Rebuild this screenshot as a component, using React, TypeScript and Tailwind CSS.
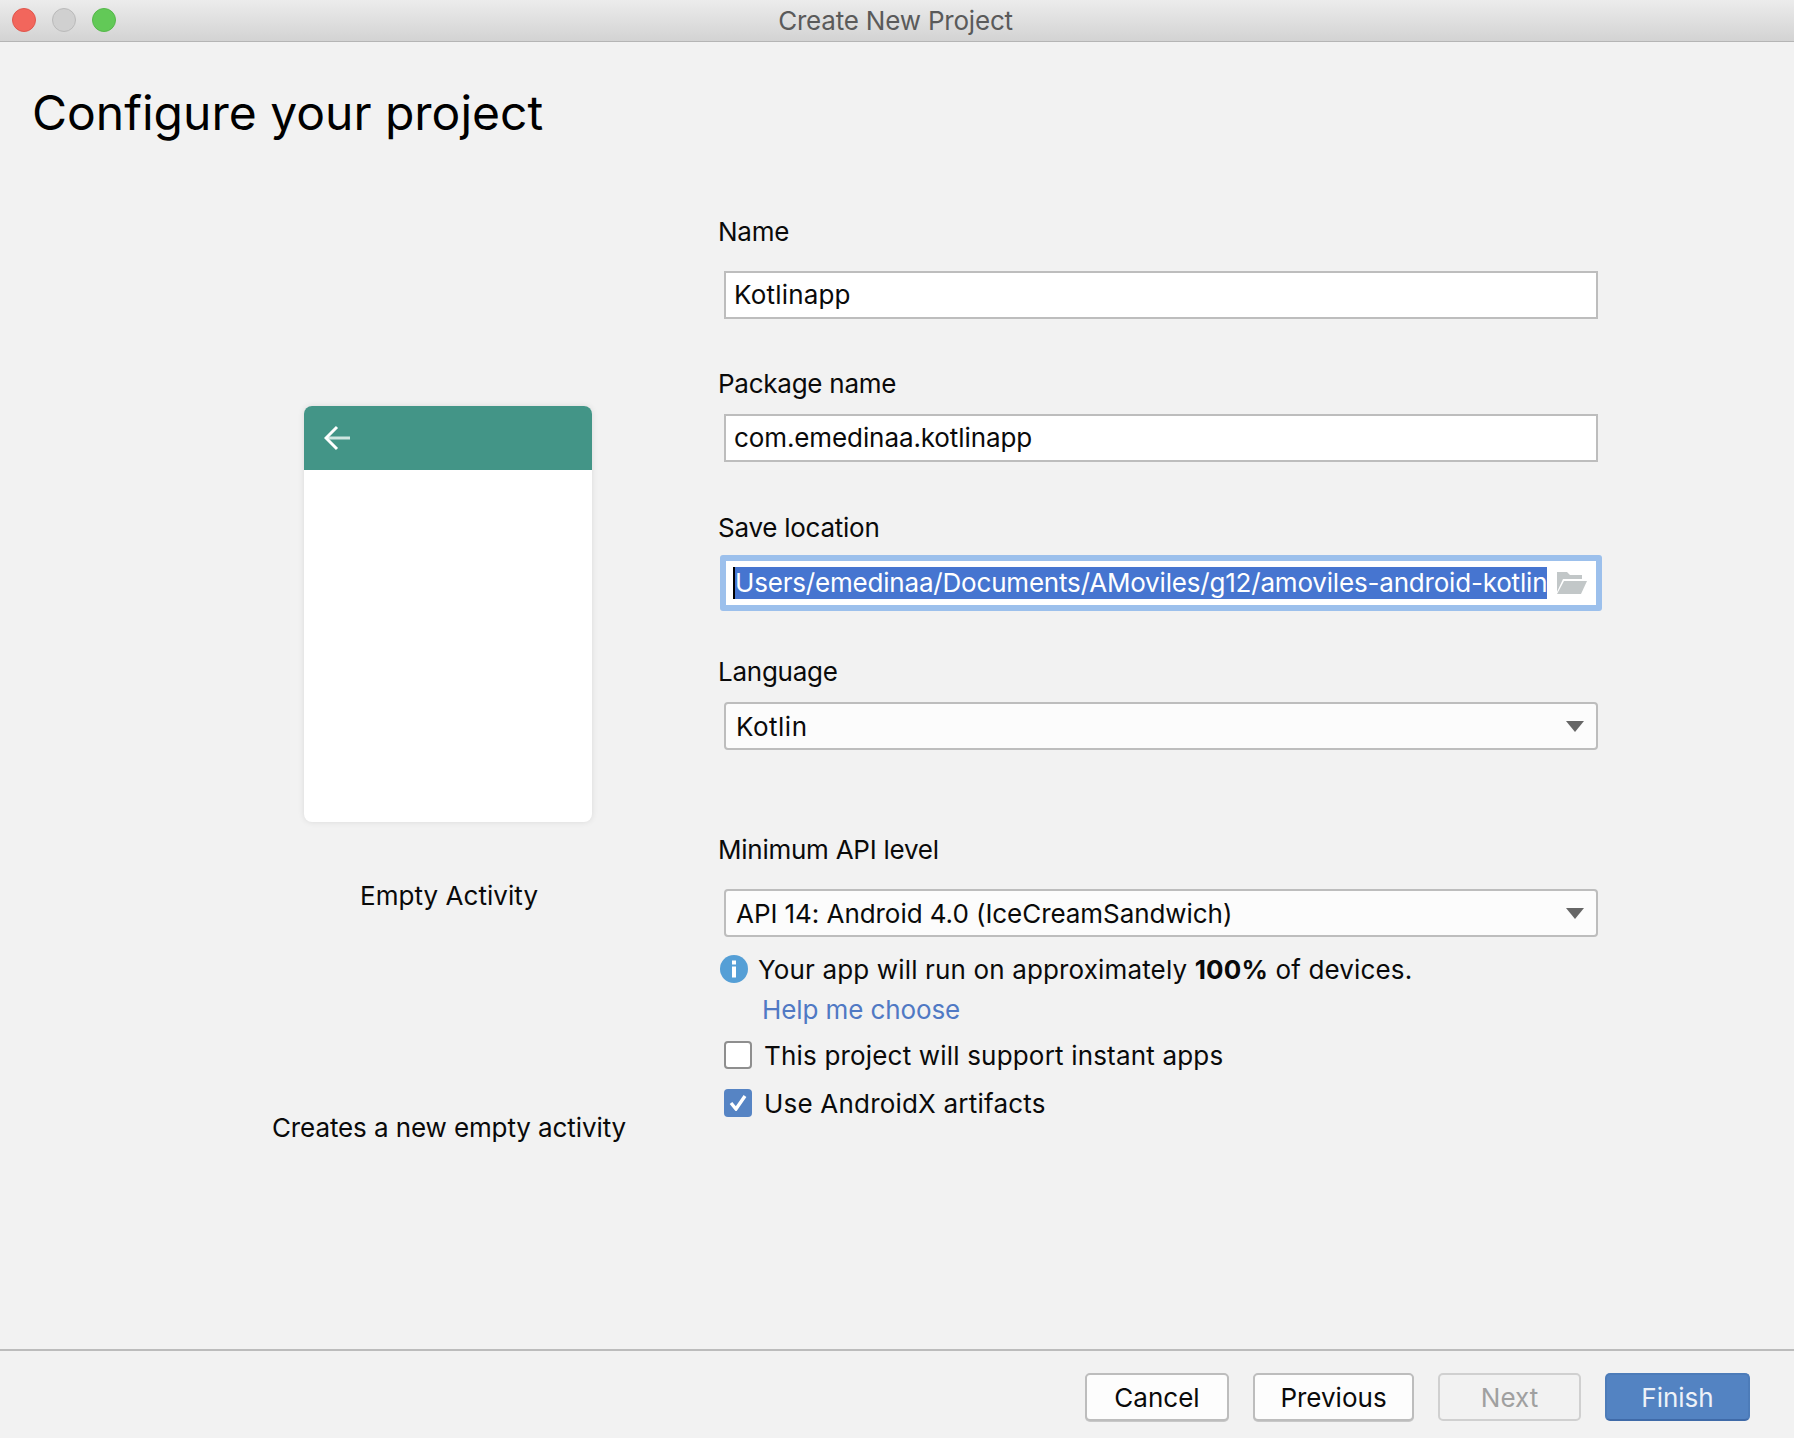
import React from 'react';

const Field: React.FC<{ label: string; children: React.ReactNode; className?: string }> = ({ label, children, className }) => (
  <div className={className}>
    <div className="h-[34px] leading-[34px] tracking-[-0.25px]">{label}</div>
    {children}
  </div>
);

const TextBox: React.FC<{ value: string; className?: string }> = ({ value, className }) => (
  <div className={`ml-[6px] w-[874px] h-[48px] bg-white border-2 border-[#bdbdbd] pl-[8px] leading-[44px] ${className ?? ''}`}>
    {value}
  </div>
);

const Combo: React.FC<{ value: string; className?: string }> = ({ value, className }) => (
  <div className={`ml-[6px] w-[874px] h-[48px] bg-[#fcfcfc] border-2 border-[#bdbdbd] rounded-[4px] pl-[10px] pr-[12px] flex items-center justify-between ${className ?? ''}`}>
    <span>{value}</span>
    <svg width="18" height="11" viewBox="0 0 18 11"><path d="M0 0h18L9 11z" fill="#666666" /></svg>
  </div>
);

const Button: React.FC<{ label: string; className: string }> = ({ label, className }) => (
  <div className={`h-[48px] rounded-[5px] border-2 flex items-center justify-center shrink-0 ${className}`}>{label}</div>
);

export default function App() {
  return (
    <div className="w-[1794px] h-[1438px] bg-[#f2f2f2] flex flex-col text-[26px] text-[#0a0a0a] font-['Inter',sans-serif] overflow-hidden">
      {/* title bar */}
      <div className="relative h-[42px] shrink-0 bg-gradient-to-b from-[#ececec] to-[#d3d3d3] border-b border-[#b5b5b5] flex items-center justify-center pr-[3px] text-[#5a5a5a] tracking-[-0.2px]">
        <div className="absolute left-[12px] top-[8px] flex gap-[16px]">
          <span className="w-[24px] h-[24px] rounded-full bg-[#f2665c] border border-[#e0564c]" />
          <span className="w-[24px] h-[24px] rounded-full bg-[#d0d0d0] border border-[#bababa]" />
          <span className="w-[24px] h-[24px] rounded-full bg-[#62c957] border border-[#55b84a]" />
        </div>
        Create New Project
      </div>

      <h1 className="ml-[32px] mt-[45px] h-[52px] leading-[52px] text-[48px] font-normal text-black">Configure your project</h1>

      <div className="flex flex-1 mt-[76px]">
        {/* template preview */}
        <div className="ml-[248px] w-[400px] flex flex-col items-center">
          <div className="mt-[191px] w-[288px] h-[416px] rounded-[8px] bg-white shadow-[0_0_6px_rgba(0,0,0,0.1)] overflow-hidden">
            <div className="h-[64px] bg-[#439587] flex items-center pl-[20px]">
              <svg width="26" height="26" viewBox="0 0 26 26" fill="none" strokeWidth="3">
                <path d="M26 13H4" stroke="#cfe6e1" />
                <path d="M13 2 2 13l11 11" stroke="#ffffff" />
              </svg>
            </div>
          </div>
          <div className="mt-[57px] h-[34px] pl-[2px] leading-[34px] tracking-[0.05px]">Empty Activity</div>
          <div className="mt-[198px] h-[34px] pl-[2px] leading-[34px] tracking-[-0.1px]">Creates a new empty activity</div>
        </div>

        {/* form */}
        <div className="ml-[70px] w-[890px]">
          <Field label="Name"><div className="mt-[22px]"><TextBox value="Kotlinapp" className="tracking-[0.2px]" /></div></Field>
          <Field label="Package name" className="mt-[48px]"><div className="mt-[13px]"><TextBox value="com.emedinaa.kotlinapp" className="tracking-[-0.1px]" /></div></Field>
          <Field label="Save location" className="mt-[49px]">
            <div className="mt-[10px] w-[882px] h-[56px] ml-[2px] rounded-[3px] bg-[#9cc0ec] p-[6px]">
              <div className="h-full bg-white flex items-center pl-[7px] pr-[9px] justify-between">
                <span className="bg-[#4675d0] text-white h-[32px] leading-[32px] border-l-2 border-black tracking-[-0.19px] whitespace-nowrap">Users/emedinaa/Documents/AMoviles/g12/amoviles-android-kotlin</span>
                <svg width="30" height="22" viewBox="0 0 30 22" fill="#c2c7c8" className="shrink-0">
                  <path d="M0 0h10l3 3h12v4H6L0 20z" />
                  <path d="M7 9h23l-6 13H0z" />
                </svg>
              </div>
            </div>
          </Field>
          <Field label="Language" className="mt-[44px]"><div className="mt-[13px]"><Combo value="Kotlin" className="tracking-[0.5px]" /></div></Field>
          <Field label="Minimum API level" className="mt-[83px]"><div className="mt-[22px]"><Combo value="API 14: Android 4.0 (IceCreamSandwich)" className="tracking-[-0.06px]" /></div></Field>

          <div className="mt-[15px] flex items-center h-[34px] tracking-[0.15px]">
            <svg width="28" height="28" viewBox="0 0 28 28" className="ml-[2px] mr-[10px]">
              <circle cx="14" cy="14" r="14" fill="#559fd6" />
              <rect x="12" y="5.5" width="4" height="4" fill="#fff" />
              <rect x="12" y="11.5" width="4" height="11" fill="#fff" />
            </svg>
            <span>Your app will run on approximately <b className="font-bold">100%</b> of devices.</span>
          </div>
          <div className="mt-[7px] ml-[44px] h-[34px] leading-[34px] text-[#5079c4] tracking-[-0.1px]">Help me choose</div>
          <div className="mt-[12px] ml-[6px] flex items-center h-[32px] tracking-[0.18px]">
            <span className="w-[28px] h-[28px] rounded-[4px] border-2 border-[#8e8e8e] bg-white mr-[12px]" />
            This project will support instant apps
          </div>
          <div className="mt-[16px] ml-[6px] flex items-center h-[32px] tracking-[0.2px]">
            <span className="w-[28px] h-[28px] rounded-[4px] bg-[#5684c4] mr-[12px] flex items-center justify-center">
              <svg width="18" height="16" viewBox="0 0 18 16" fill="none" stroke="#fff" strokeWidth="3.4"><path d="M2 8l5 6L16 1" /></svg>
            </span>
            Use AndroidX artifacts
          </div>
        </div>
      </div>

      {/* footer */}
      <div className="h-[89px] shrink-0 border-t-2 border-[#bcbcbc] flex items-start justify-end pt-[22px] pr-[44px] gap-[24px]">
        <Button label="Cancel" className="w-[144px] bg-[#fdfdfd] border-[#bdbdbd] shadow-[0_1px_0_#c8c8c8]" />
        <Button label="Previous" className="w-[161px] bg-[#fdfdfd] border-[#bdbdbd] shadow-[0_1px_0_#c8c8c8]" />
        <Button label="Next" className="w-[143px] bg-[#f2f2f2] border-[#d0d0d0] text-[#a0a0a0]" />
        <Button label="Finish" className="w-[145px] bg-[#5383c2] border-[#4d7cb9] border-b-[#3f6aa8] text-[#edf2f8]" />
      </div>
    </div>
  );
}
